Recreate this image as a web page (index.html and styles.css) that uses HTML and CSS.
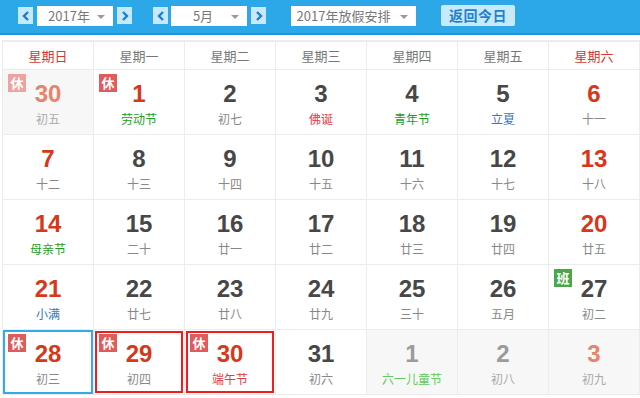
FILE: index.html
```html
<!DOCTYPE html>
<html lang="zh">
<head>
<meta charset="utf-8">
<title>万年历</title>
<link rel="stylesheet" href="styles.css">
</head>
<body>
<div class="topbar">
  <span class="arrow-btn"><svg width="8" height="10" viewBox="0 0 8 10"><path d="M6 1 L2 5 L6 9" fill="none" stroke="#1d7fcc" stroke-width="2.4"/></svg></span>
  <span class="select sel-year">2017年<i class="caret"></i></span>
  <span class="arrow-btn"><svg width="8" height="10" viewBox="0 0 8 10"><path d="M2 1 L6 5 L2 9" fill="none" stroke="#1d7fcc" stroke-width="2.4"/></svg></span>
  <span class="arrow-btn gap-l"><svg width="8" height="10" viewBox="0 0 8 10"><path d="M6 1 L2 5 L6 9" fill="none" stroke="#1d7fcc" stroke-width="2.4"/></svg></span>
  <span class="select sel-month">5月<i class="caret"></i></span>
  <span class="arrow-btn"><svg width="8" height="10" viewBox="0 0 8 10"><path d="M2 1 L6 5 L2 9" fill="none" stroke="#1d7fcc" stroke-width="2.4"/></svg></span>
  <span class="select sel-holiday">2017年放假安排<i class="caret"></i></span>
  <span class="today-btn">返回今日</span>
</div>

<div class="cal">
  <div class="wk wkend">星期日</div>
  <div class="wk">星期一</div>
  <div class="wk">星期二</div>
  <div class="wk">星期三</div>
  <div class="wk">星期四</div>
  <div class="wk">星期五</div>
  <div class="wk wkend">星期六</div>

  <div class="day other"><span class="badge rest faded">休</span><div class="num red-faded">30</div><div class="lunar">初五</div></div>
  <div class="day"><span class="badge rest">休</span><div class="num red">1</div><div class="lunar green">劳动节</div></div>
  <div class="day"><div class="num">2</div><div class="lunar">初七</div></div>
  <div class="day"><div class="num">3</div><div class="lunar pink">佛诞</div></div>
  <div class="day"><div class="num">4</div><div class="lunar green">青年节</div></div>
  <div class="day"><div class="num">5</div><div class="lunar blue">立夏</div></div>
  <div class="day"><div class="num red">6</div><div class="lunar">十一</div></div>

  <div class="day"><div class="num red">7</div><div class="lunar">十二</div></div>
  <div class="day"><div class="num">8</div><div class="lunar">十三</div></div>
  <div class="day"><div class="num">9</div><div class="lunar">十四</div></div>
  <div class="day"><div class="num">10</div><div class="lunar">十五</div></div>
  <div class="day"><div class="num">11</div><div class="lunar">十六</div></div>
  <div class="day"><div class="num">12</div><div class="lunar">十七</div></div>
  <div class="day"><div class="num red">13</div><div class="lunar">十八</div></div>

  <div class="day"><div class="num red">14</div><div class="lunar green">母亲节</div></div>
  <div class="day"><div class="num">15</div><div class="lunar">二十</div></div>
  <div class="day"><div class="num">16</div><div class="lunar">廿一</div></div>
  <div class="day"><div class="num">17</div><div class="lunar">廿二</div></div>
  <div class="day"><div class="num">18</div><div class="lunar">廿三</div></div>
  <div class="day"><div class="num">19</div><div class="lunar">廿四</div></div>
  <div class="day"><div class="num red">20</div><div class="lunar">廿五</div></div>

  <div class="day"><div class="num red">21</div><div class="lunar blue">小满</div></div>
  <div class="day"><div class="num">22</div><div class="lunar">廿七</div></div>
  <div class="day"><div class="num">23</div><div class="lunar">廿八</div></div>
  <div class="day"><div class="num">24</div><div class="lunar">廿九</div></div>
  <div class="day"><div class="num">25</div><div class="lunar">三十</div></div>
  <div class="day"><div class="num">26</div><div class="lunar">五月</div></div>
  <div class="day"><span class="badge work">班</span><div class="num">27</div><div class="lunar">初二</div></div>

  <div class="day selected"><span class="badge rest">休</span><div class="num red">28</div><div class="lunar">初三</div></div>
  <div class="day holiday"><span class="badge rest">休</span><div class="num red">29</div><div class="lunar">初四</div></div>
  <div class="day holiday"><span class="badge rest">休</span><div class="num red">30</div><div class="lunar pink">端午节</div></div>
  <div class="day"><div class="num">31</div><div class="lunar">初六</div></div>
  <div class="day other"><div class="num gray">1</div><div class="lunar lightgreen">六一儿童节</div></div>
  <div class="day other"><div class="num gray">2</div><div class="lunar">初八</div></div>
  <div class="day other"><div class="num red-faded">3</div><div class="lunar">初九</div></div>
</div>
</body>
</html>
```

FILE: styles.css
```css
* { box-sizing: border-box; }
html, body { margin: 0; padding: 0; background: #fff; }
body {
  width: 640px;
  height: 398px;
  overflow: hidden;
  font-family: "Noto Sans CJK SC", "Noto Sans", sans-serif;
}

.topbar {
  height: 35px;
  background: #2ca8e9;
  border-bottom: 2px solid #1f93d6;
  display: flex;
  align-items: center;
  padding-left: 18px;
  padding-bottom: 2px;
}

.arrow-btn {
  width: 15px;
  height: 17px;
  background: #c8e9fb;
  display: flex;
  align-items: center;
  justify-content: center;
  margin-right: 4px;
}
.arrow-btn.gap-l { margin-left: 17px; }

.select {
  position: relative;
  height: 20px;
  background: #fff;
  color: #777;
  font-size: 13px;
  line-height: 20px;
  margin-right: 4px;
  padding-right: 12px;
  text-align: center;
  white-space: nowrap;
}
.sel-year { width: 76px; }
.sel-month { width: 76px; margin-left: -1px; }
.sel-holiday { width: 125px; margin-left: 21px; padding-left: 2px; padding-right: 22px; }

.caret {
  position: absolute;
  right: 8px;
  top: 9px;
  width: 0;
  height: 0;
  border-left: 4px solid transparent;
  border-right: 4px solid transparent;
  border-top: 4px solid #999;
}

.today-btn {
  margin-left: 21px;
  width: 74px;
  height: 21px;
  background: #c8e9fb;
  border-radius: 2px;
  color: #1f83cc;
  font-weight: bold;
  font-size: 14px;
  line-height: 21px;
  text-align: center;
  letter-spacing: 0.5px;
}

.cal {
  margin: 5px 0 0 2px;
  border-top: 2px solid #ececec;
  border-left: 1px solid #ececec;
  display: grid;
  grid-template-columns: repeat(7, 91px);
  grid-template-rows: 28px repeat(5, 65px);
}

.wk {
  border-right: 1px solid #ececec;
  border-bottom: 1px solid #ececec;
  text-align: center;
  font-size: 13px;
  line-height: 27px;
  color: #777;
}
.wk.wkend { color: #d9382a; }

.day {
  position: relative;
  border-right: 1px solid #ececec;
  border-bottom: 1px solid #ececec;
  text-align: center;
  padding-top: 10px;
}
.day.other { background: #f7f7f7; }
.day.selected { box-shadow: inset 0 0 0 2px #35aae8; }
.day.holiday { box-shadow: inset 0 0 0 1px #fff, inset 0 0 0 3px #f21c1c; }

.num {
  font-family: "Liberation Sans", Arial, sans-serif;
  font-weight: bold;
  font-size: 24px;
  line-height: 28px;
  color: #474747;
}
.num.red { color: #d7381a; }
.num.red-faded { color: #e8836c; }
.num.gray { color: #9b9b9b; }

.lunar {
  margin-top: 3px;
  font-size: 12px;
  line-height: 16px;
  color: #888;
}
.day.other .lunar { color: #aaa; }
.lunar.green { color: #1e9e1e; }
.lunar.pink { color: #e23a44; }
.lunar.blue { color: #2f76c6; }
.day.other .lunar.lightgreen { color: #5fcb5f; }

.badge {
  position: absolute;
  left: 5px;
  top: 4px;
  width: 18px;
  height: 18px;
  font-size: 13px;
  line-height: 18px;
  font-weight: bold;
  color: #fff;
  text-align: center;
}
.badge.rest { background: #e05b5b; }
.badge.rest.faded { background: #eea2a2; }
.badge.work { background: #4ba74b; }
```
